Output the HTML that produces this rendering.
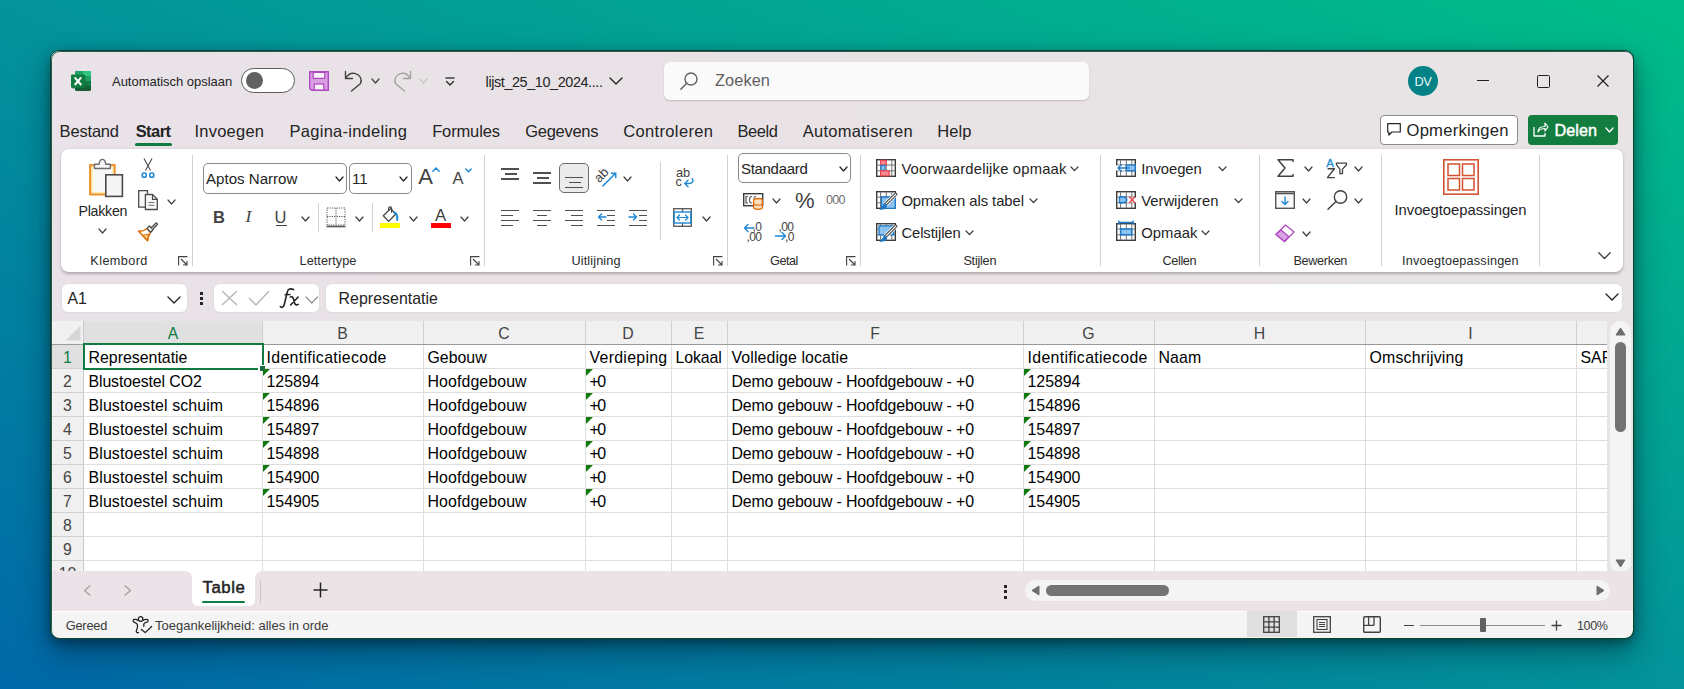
<!DOCTYPE html><html><head><meta charset="utf-8"><style>
html,body{margin:0;padding:0;}
body{width:1684px;height:689px;overflow:hidden;position:relative;font-family:"Liberation Sans",sans-serif;
background:linear-gradient(to top right,#0068a8 0%,#03939a 50%,#00bd88 100%);}
.t{position:absolute;line-height:1;white-space:nowrap;}
svg{overflow:visible}
</style></head><body>
<div style="position:absolute;left:51px;top:51px;width:1582px;height:587px;border-radius:8px;background:linear-gradient(to right,#e9e2e8,#e8e3e4);box-shadow:0 0 0 1px #07443a,0 4px 12px rgba(0,0,0,0.38),0 14px 32px rgba(0,15,35,0.42);"></div>
<svg style="position:absolute;left:71px;top:71px" width="20" height="20" viewBox="0 0 20 20" fill="none">
<rect x="4" y="0" width="16" height="20" rx="1.5" fill="#185c37"/>
<rect x="4" y="0" width="16" height="5" rx="1.5" fill="#21a366"/>
<rect x="12" y="0" width="8" height="5" fill="#33c481"/>
<rect x="4" y="5" width="16" height="5" fill="#21a366"/>
<rect x="12" y="5" width="8" height="5" fill="#21a366"/>
<rect x="4" y="10" width="16" height="5" fill="#107c41"/>
<rect x="0.5" y="4.5" width="14" height="13" rx="1" fill="#0b5a30" opacity="0.6"/>
<rect x="0" y="3.5" width="14" height="13.3" rx="1.2" fill="#107c41"/>
<path d="M3.7 6.3 L10.2 14 M10.2 6.3 L3.7 14" stroke="#fff" stroke-width="2"/>
</svg>
<div class="t" style="left:112.00px;top:75.30px;font-size:13px;color:#242424;font-weight:normal;letter-spacing:-0.028px;">Automatisch opslaan</div>
<div style="position:absolute;left:241px;top:68px;width:52px;height:23px;border:1px solid #5c5c5c;border-radius:13px;background:#fff;"></div>
<div style="position:absolute;left:245.5px;top:71.5px;width:17px;height:17px;border-radius:50%;background:#616161;"></div>
<svg style="position:absolute;left:309px;top:71px" width="20" height="20" viewBox="0 0 20 20" fill="none">
<path d="M0.7 0.7 H19.3 V19.3 H2.5 L0.7 17.5 Z" fill="#d9a0e2" stroke="#b146c2" stroke-width="1.4"/>
<rect x="4.2" y="1.4" width="11.6" height="6" fill="#f7f2f8" stroke="#b146c2" stroke-width="1.2"/>
<rect x="5.2" y="13" width="9.6" height="6" fill="#f7f2f8" stroke="#b146c2" stroke-width="1.2"/>
</svg>
<svg style="position:absolute;left:344px;top:70px" width="20" height="22" viewBox="0 0 20 22" fill="none">
<path d="M1.5 1.5 V8.5 H8.5" stroke="#424242" stroke-width="1.4" stroke-linecap="round" stroke-linejoin="round"/>
<path d="M1.8 8.3 C4 4.5 8 2.7 11.5 3.6 C16 4.8 18.5 9.5 16.5 13.5 L7.5 21" stroke="#424242" stroke-width="1.4" stroke-linecap="round"/>
</svg>
<svg style="position:absolute;left:371px;top:77.5px" width="9" height="6" viewBox="0 0 9 6" fill="none"><path d="M1 1 L4.5 5 L8 1" stroke="#424242" stroke-width="1.3" stroke-linecap="round" stroke-linejoin="round"/></svg>
<svg style="position:absolute;left:392px;top:70px" width="20" height="22" viewBox="0 0 20 22" fill="none">
<path d="M18.5 1.5 V8.5 H11.5" stroke="#a3a3a3" stroke-width="1.4" stroke-linecap="round" stroke-linejoin="round"/>
<path d="M18.2 8.3 C16 4.5 12 2.7 8.5 3.6 C4 4.8 1.5 9.5 3.5 13.5 L12.5 21" stroke="#a3a3a3" stroke-width="1.4" stroke-linecap="round"/>
</svg>
<svg style="position:absolute;left:419px;top:77.5px" width="9" height="6" viewBox="0 0 9 6" fill="none"><path d="M1 1 L4.5 5 L8 1" stroke="#c4c4c4" stroke-width="1.3" stroke-linecap="round" stroke-linejoin="round"/></svg>
<svg style="position:absolute;left:445px;top:77px" width="10" height="10" viewBox="0 0 10 10" fill="none"><path d="M0.5 1 H9.5" stroke="#242424" stroke-width="1.3"/><path d="M1.5 4.5 L5 8 L8.5 4.5" stroke="#242424" stroke-width="1.3" stroke-linecap="round" stroke-linejoin="round"/></svg>
<div class="t" style="left:485.60px;top:74.81px;font-size:14.4px;color:#242424;font-weight:normal;letter-spacing:-0.395px;">lijst_25_10_2024....</div>
<svg style="position:absolute;left:609px;top:77px" width="14" height="8" viewBox="0 0 14 8" fill="none"><path d="M1 1 L7.0 7 L13 1" stroke="#242424" stroke-width="1.4" stroke-linecap="round" stroke-linejoin="round"/></svg>
<div style="position:absolute;left:664px;top:62px;width:425px;height:38px;border-radius:6px;background:#fafafa;box-shadow:0 1px 1.5px rgba(0,0,0,0.18);"></div>
<svg style="position:absolute;left:680px;top:72px" width="18" height="18" viewBox="0 0 18 18" fill="none"><circle cx="11" cy="7" r="6" stroke="#616161" stroke-width="1.4"/><path d="M6.7 11.3 L0.8 17.2" stroke="#616161" stroke-width="1.5" stroke-linecap="round"/></svg>
<div class="t" style="left:715.00px;top:72.12px;font-size:16.4px;color:#616161;font-weight:normal;letter-spacing:0.060px;">Zoeken</div>
<div style="position:absolute;left:1408px;top:66px;width:30px;height:30px;border-radius:50%;background:#038387;"></div>
<div class="t" style="left:1408px;top:75.5px;width:30px;text-align:center;font-size:12.8px;color:#e8f6f6;letter-spacing:-0.3px">DV</div>
<div style="position:absolute;left:1477px;top:80px;width:12px;height:1.2px;background:#1f1f1f;"></div>
<div style="position:absolute;left:1537px;top:75px;width:10.6px;height:10.6px;border:1.2px solid #1f1f1f;border-radius:1.5px;"></div>
<svg style="position:absolute;left:1597px;top:75px" width="12" height="12" viewBox="0 0 12 12" fill="none"><path d="M0.5 0.5 L11.5 11.5 M11.5 0.5 L0.5 11.5" stroke="#1f1f1f" stroke-width="1.2"/></svg>
<div class="t" style="left:59.60px;top:123.03px;font-size:16.5px;color:#242424;font-weight:normal;letter-spacing:-0.183px;">Bestand</div>
<div class="t" style="left:135.70px;top:123.03px;font-size:16.5px;color:#242424;font-weight:bold;letter-spacing:-0.575px;">Start</div>
<div class="t" style="left:194.40px;top:123.03px;font-size:16.5px;color:#242424;font-weight:normal;letter-spacing:0.243px;">Invoegen</div>
<div class="t" style="left:289.60px;top:123.03px;font-size:16.5px;color:#242424;font-weight:normal;letter-spacing:0.257px;">Pagina-indeling</div>
<div class="t" style="left:432.20px;top:123.03px;font-size:16.5px;color:#242424;font-weight:normal;letter-spacing:-0.143px;">Formules</div>
<div class="t" style="left:525.30px;top:123.03px;font-size:16.5px;color:#242424;font-weight:normal;letter-spacing:-0.300px;">Gegevens</div>
<div class="t" style="left:623.20px;top:123.03px;font-size:16.5px;color:#242424;font-weight:normal;letter-spacing:0.360px;">Controleren</div>
<div class="t" style="left:737.50px;top:123.03px;font-size:16.5px;color:#242424;font-weight:normal;letter-spacing:-0.425px;">Beeld</div>
<div class="t" style="left:802.70px;top:123.03px;font-size:16.5px;color:#242424;font-weight:normal;letter-spacing:0.300px;">Automatiseren</div>
<div class="t" style="left:937.30px;top:123.03px;font-size:16.5px;color:#242424;font-weight:normal;letter-spacing:0.100px;">Help</div>
<div style="position:absolute;left:135px;top:143px;width:37px;height:3px;background:#107c41;border-radius:2px;"></div>
<div style="position:absolute;left:1380px;top:115px;width:136px;height:28px;border:1px solid #8a8a8a;border-radius:4px;background:#fff;"></div>
<svg style="position:absolute;left:1387px;top:123px" width="14" height="13" viewBox="0 0 14 13" fill="none"><path d="M0.7 0.7 H13.3 V9 H5 L1.8 12 V9 H0.7 Z" stroke="#242424" stroke-width="1.2" stroke-linejoin="round"/></svg>
<div class="t" style="left:1406.50px;top:122.75px;font-size:16.6px;color:#242424;font-weight:normal;letter-spacing:0.240px;">Opmerkingen</div>
<div style="position:absolute;left:1528px;top:115px;width:90px;height:30px;border-radius:4px;background:#137c3f;"></div>
<svg style="position:absolute;left:1533px;top:121px" width="16" height="16" viewBox="0 0 16 16" fill="none"><path d="M1 6 V15 H12 V12" stroke="#fff" stroke-width="1.3" stroke-linejoin="round"/><path d="M5 11 C5 7 8 5.5 12 5.5 V2 L15 6 L12 10 V7.5 C9 7.5 6.5 8.5 5 11 Z" stroke="#fff" stroke-width="1.2" stroke-linejoin="round"/></svg>
<div class="t" style="left:1554.60px;top:122.19px;font-size:16.2px;color:#ffffff;font-weight:normal;letter-spacing:0.025px;-webkit-text-stroke:0.45px #fff;">Delen</div>
<svg style="position:absolute;left:1605px;top:127px" width="9" height="6" viewBox="0 0 9 6" fill="none"><path d="M1 1 L4.5 5 L8 1" stroke="#ffffff" stroke-width="1.3" stroke-linecap="round" stroke-linejoin="round"/></svg>
<div style="position:absolute;left:61px;top:149px;width:1562px;height:123px;border-radius:8px;background:#fff;box-shadow:0 1.5px 3px rgba(40,20,30,0.28);"></div>
<div style="position:absolute;left:192px;top:155px;width:1px;height:111px;background:#d1d1d1;"></div>
<div style="position:absolute;left:484px;top:155px;width:1px;height:111px;background:#d1d1d1;"></div>
<div style="position:absolute;left:727px;top:155px;width:1px;height:111px;background:#d1d1d1;"></div>
<div style="position:absolute;left:860px;top:155px;width:1px;height:111px;background:#d1d1d1;"></div>
<div style="position:absolute;left:1100px;top:155px;width:1px;height:111px;background:#d1d1d1;"></div>
<div style="position:absolute;left:1259px;top:155px;width:1px;height:111px;background:#d1d1d1;"></div>
<div style="position:absolute;left:1381px;top:155px;width:1px;height:111px;background:#d1d1d1;"></div>
<div style="position:absolute;left:1539px;top:155px;width:1px;height:111px;background:#d1d1d1;"></div>
<div style="position:absolute;left:660px;top:162px;width:1px;height:78px;background:#d1d1d1;"></div>
<div style="position:absolute;left:318px;top:203px;width:1px;height:29px;background:#d1d1d1;"></div>
<div style="position:absolute;left:372px;top:203px;width:1px;height:29px;background:#d1d1d1;"></div>
<div class="t" style="left:90.30px;top:255.25px;font-size:12.7px;color:#2b2b2b;font-weight:normal;letter-spacing:0.400px;">Klembord</div>
<div class="t" style="left:299.60px;top:255.25px;font-size:12.7px;color:#2b2b2b;font-weight:normal;letter-spacing:0.033px;">Lettertype</div>
<div class="t" style="left:571.50px;top:255.25px;font-size:12.7px;color:#2b2b2b;font-weight:normal;letter-spacing:0.122px;">Uitlijning</div>
<div class="t" style="left:770.00px;top:255.25px;font-size:12.7px;color:#2b2b2b;font-weight:normal;letter-spacing:-0.475px;">Getal</div>
<div class="t" style="left:963.40px;top:255.25px;font-size:12.7px;color:#2b2b2b;font-weight:normal;letter-spacing:-0.250px;">Stijlen</div>
<div class="t" style="left:1162.50px;top:255.25px;font-size:12.7px;color:#2b2b2b;font-weight:normal;letter-spacing:-0.380px;">Cellen</div>
<div class="t" style="left:1293.50px;top:255.25px;font-size:12.7px;color:#2b2b2b;font-weight:normal;letter-spacing:-0.357px;">Bewerken</div>
<div class="t" style="left:1402.00px;top:255.25px;font-size:12.7px;color:#2b2b2b;font-weight:normal;letter-spacing:0.182px;">Invoegtoepassingen</div>
<svg style="position:absolute;left:178px;top:256px" width="10" height="10" viewBox="0 0 10 10" fill="none"><path d="M0.6 9.4 V0.6 H9.4" stroke="#424242" stroke-width="1.1"/><path d="M3 3 L9 9 M9 5 V9 H5" stroke="#424242" stroke-width="1.1"/></svg>
<svg style="position:absolute;left:470px;top:256px" width="10" height="10" viewBox="0 0 10 10" fill="none"><path d="M0.6 9.4 V0.6 H9.4" stroke="#424242" stroke-width="1.1"/><path d="M3 3 L9 9 M9 5 V9 H5" stroke="#424242" stroke-width="1.1"/></svg>
<svg style="position:absolute;left:713px;top:256px" width="10" height="10" viewBox="0 0 10 10" fill="none"><path d="M0.6 9.4 V0.6 H9.4" stroke="#424242" stroke-width="1.1"/><path d="M3 3 L9 9 M9 5 V9 H5" stroke="#424242" stroke-width="1.1"/></svg>
<svg style="position:absolute;left:846px;top:256px" width="10" height="10" viewBox="0 0 10 10" fill="none"><path d="M0.6 9.4 V0.6 H9.4" stroke="#424242" stroke-width="1.1"/><path d="M3 3 L9 9 M9 5 V9 H5" stroke="#424242" stroke-width="1.1"/></svg>
<svg style="position:absolute;left:88px;top:158px" width="36" height="40" viewBox="0 0 36 40" fill="none">
<rect x="2.2" y="7.2" width="24.4" height="29.2" fill="#fdf3dc" stroke="#e8912d" stroke-width="2.2"/>
<rect x="4" y="9" width="20.8" height="25.6" fill="#f8f8f8" stroke="#fde7a6" stroke-width="1.4"/>
<path d="M6.5 10.5 V6.3 H11 C11.5 3 12.5 1.4 14.4 1.4 C16.3 1.4 17.3 3 17.8 6.3 H22.3 V10.5 Z" fill="#f5f5f5" stroke="#6e6e6e" stroke-width="1.4" stroke-linejoin="round"/>
<rect x="17.8" y="16.8" width="16.6" height="21.6" fill="#f5f5f5" stroke="#4a4a4a" stroke-width="1.6"/>
</svg>
<div class="t" style="left:78.50px;top:204.48px;font-size:14.2px;color:#242424;font-weight:normal;letter-spacing:-0.250px;">Plakken</div>
<svg style="position:absolute;left:98px;top:228px" width="9" height="6" viewBox="0 0 9 6" fill="none"><path d="M1 1 L4.5 5 L8 1" stroke="#424242" stroke-width="1.2" stroke-linecap="round" stroke-linejoin="round"/></svg>
<svg style="position:absolute;left:141px;top:158px" width="14" height="20" viewBox="0 0 14 20" fill="none">
<path d="M3 0.5 L9.5 12.5 M11 0.5 L4.5 12.5" stroke="#4a4a4a" stroke-width="1.1"/>
<circle cx="3.2" cy="17.2" r="2.1" stroke="#1e88d6" stroke-width="1.5" fill="#fff"/>
<circle cx="10.8" cy="17.2" r="2.1" stroke="#1e88d6" stroke-width="1.5" fill="#fff"/>
</svg>
<svg style="position:absolute;left:138px;top:190px" width="20" height="20" viewBox="0 0 20 20" fill="none">
<path d="M9.5 3.8 V0.7 H0.7 V17.2 H7" stroke="#4a4a4a" stroke-width="1.3" fill="#f8f8f8"/>
<path d="M7.4 4.5 H14.5 L19.3 9.3 V19.5 H7.4 Z" fill="#f8f8f8" stroke="#4a4a4a" stroke-width="1.3" stroke-linejoin="round"/>
<path d="M14.5 4.5 V9.3 H19.3" stroke="#4a4a4a" stroke-width="1.2"/>
<path d="M10.5 12.5 H16.3 M10.5 15.3 H16.3" stroke="#6e6e6e" stroke-width="1.1"/>
</svg>
<svg style="position:absolute;left:167px;top:199px" width="9" height="6" viewBox="0 0 9 6" fill="none"><path d="M1 1 L4.5 5 L8 1" stroke="#424242" stroke-width="1.2" stroke-linecap="round" stroke-linejoin="round"/></svg>
<svg style="position:absolute;left:137px;top:220px" width="22" height="22" viewBox="0 0 22 22" fill="none">
<path d="M1.5 11 C4 11.5 7.5 10.5 10 8.5 L13.6 12.2 C11.7 14.6 10.8 18 10.5 20.8 Z" fill="#fff" stroke="#e06c00" stroke-width="1.5" stroke-linejoin="round"/>
<path d="M5.5 15.2 C7.5 14.8 9.2 14.5 11.5 14.2 L10.6 20.5 Z" fill="#fbd79f" stroke="#e06c00" stroke-width="1.1" stroke-linejoin="round"/>
<path d="M10 8.5 L12.5 6 L16.1 9.7 L13.6 12.2 Z" fill="#f8f8f8" stroke="#4a4a4a" stroke-width="1.3" stroke-linejoin="round"/>
<path d="M14.3 7.8 L18.8 3.3 C19.6 2.5 21 3.9 20.2 4.7 L15.7 9.2" fill="#f8f8f8" stroke="#4a4a4a" stroke-width="1.3"/>
</svg>
<div style="position:absolute;left:203px;top:163px;width:142px;height:29px;border:1px solid #8a8a8a;border-radius:5px;background:#fff;"></div>
<div class="t" style="left:206.00px;top:171.22px;font-size:15.1px;color:#242424;font-weight:normal;letter-spacing:-0.009px;">Aptos Narrow</div>
<svg style="position:absolute;left:334.5px;top:175.5px" width="9" height="6" viewBox="0 0 9 6" fill="none"><path d="M1 1 L4.5 5 L8 1" stroke="#242424" stroke-width="1.3" stroke-linecap="round" stroke-linejoin="round"/></svg>
<div style="position:absolute;left:349px;top:163px;width:61px;height:29px;border:1px solid #8a8a8a;border-radius:5px;background:#fff;"></div>
<div class="t" style="left:352.00px;top:171.22px;font-size:15.1px;color:#242424;font-weight:normal;letter-spacing:0.000px;">11</div>
<svg style="position:absolute;left:399px;top:175.5px" width="9" height="6" viewBox="0 0 9 6" fill="none"><path d="M1 1 L4.5 5 L8 1" stroke="#242424" stroke-width="1.3" stroke-linecap="round" stroke-linejoin="round"/></svg>
<div class="t" style="left:418.20px;top:165.68px;font-size:22px;color:#424242;font-weight:normal;letter-spacing:0.000px;">A</div>
<svg style="position:absolute;left:432px;top:167px" width="8" height="5" viewBox="0 0 8 5" fill="none"><path d="M0.8 4.2 L4 1 L7.2 4.2" stroke="#1e88d6" stroke-width="1.4" stroke-linecap="round"/></svg>
<div class="t" style="left:452.60px;top:170.33px;font-size:16.5px;color:#424242;font-weight:normal;letter-spacing:0.000px;">A</div>
<svg style="position:absolute;left:465px;top:168px" width="7" height="5" viewBox="0 0 7 5" fill="none"><path d="M0.8 1 L3.5 3.8 L6.2 1" stroke="#1e88d6" stroke-width="1.4" stroke-linecap="round"/></svg>
<div class="t" style="left:213.00px;top:208.53px;font-size:16.5px;color:#424242;font-weight:bold;letter-spacing:0.000px;">B</div>
<div class="t" style="left:245.50px;top:207.99px;font-size:17.5px;color:#424242;font-weight:normal;letter-spacing:0.000px;font-family:'Liberation Serif',serif;"><i>I</i></div>
<div class="t" style="left:274.60px;top:208.53px;font-size:16.5px;color:#424242;font-weight:normal;letter-spacing:0.000px;">U</div>
<div style="position:absolute;left:276px;top:224.5px;width:11px;height:1.4px;background:#424242;"></div>
<svg style="position:absolute;left:301px;top:215.5px" width="9" height="6" viewBox="0 0 9 6" fill="none"><path d="M1 1 L4.5 5 L8 1" stroke="#424242" stroke-width="1.3" stroke-linecap="round" stroke-linejoin="round"/></svg>
<svg style="position:absolute;left:326px;top:207px" width="20" height="21" viewBox="0 0 20 21" fill="none">
<path d="M1 1 H19 V18 H1 Z M10 1 V18 M1 9.5 H19" stroke="#555" stroke-width="1" stroke-dasharray="1.2 1.2"/>
<path d="M0.5 19.5 H19.5" stroke="#555" stroke-width="1.6"/>
</svg>
<svg style="position:absolute;left:355px;top:215.5px" width="9" height="6" viewBox="0 0 9 6" fill="none"><path d="M1 1 L4.5 5 L8 1" stroke="#424242" stroke-width="1.3" stroke-linecap="round" stroke-linejoin="round"/></svg>
<svg style="position:absolute;left:380px;top:206px" width="20" height="18" viewBox="0 0 20 18" fill="none">
<path d="M3.3 9.8 L10.6 2.6 L15.8 8 L8.6 15.4 Z" stroke="#424242" stroke-width="1.3" stroke-linejoin="round" fill="#fff"/>
<path d="M8.6 4.6 V2.2 C8.6 0.3 11.6 0.3 11.6 2.2 V6.2" stroke="#424242" stroke-width="1.2" stroke-linecap="round"/>
<path d="M14.3 6.4 C16.6 6.8 17.4 9.5 17.3 14" stroke="#1e88d6" stroke-width="2" stroke-linecap="round"/>
</svg>
<div style="position:absolute;left:380px;top:223px;width:20px;height:5px;background:#ffff00;"></div>
<svg style="position:absolute;left:409px;top:215.5px" width="9" height="6" viewBox="0 0 9 6" fill="none"><path d="M1 1 L4.5 5 L8 1" stroke="#424242" stroke-width="1.3" stroke-linecap="round" stroke-linejoin="round"/></svg>
<div class="t" style="left:435.00px;top:207.58px;font-size:16.8px;color:#424242;font-weight:normal;letter-spacing:0.000px;">A</div>
<div style="position:absolute;left:431px;top:223px;width:20px;height:5px;background:#ff0000;"></div>
<svg style="position:absolute;left:460px;top:215.5px" width="9" height="6" viewBox="0 0 9 6" fill="none"><path d="M1 1 L4.5 5 L8 1" stroke="#424242" stroke-width="1.3" stroke-linecap="round" stroke-linejoin="round"/></svg>
<div style="position:absolute;left:501px;top:168px;width:18px;height:1.5px;background:#4f4f4f;"></div>
<div style="position:absolute;left:505px;top:173px;width:12px;height:1.5px;background:#4f4f4f;"></div>
<div style="position:absolute;left:501px;top:178px;width:18px;height:1.5px;background:#4f4f4f;"></div>
<div style="position:absolute;left:533px;top:172px;width:18px;height:1.5px;background:#4f4f4f;"></div>
<div style="position:absolute;left:537px;top:177px;width:12px;height:1.5px;background:#4f4f4f;"></div>
<div style="position:absolute;left:533px;top:182px;width:18px;height:1.5px;background:#4f4f4f;"></div>
<div style="position:absolute;left:559px;top:163px;width:28px;height:28px;border:1px solid #6b6b6b;border-radius:5px;background:#ebebeb;"></div>
<div style="position:absolute;left:565px;top:176.5px;width:18px;height:1.5px;background:#4f4f4f;"></div>
<div style="position:absolute;left:569px;top:181.5px;width:12px;height:1.5px;background:#4f4f4f;"></div>
<div style="position:absolute;left:565px;top:186.5px;width:18px;height:1.5px;background:#4f4f4f;"></div>
<svg style="position:absolute;left:595px;top:166px" width="22" height="22" viewBox="0 0 22 22" fill="none">
<text x="0" y="0" transform="translate(4.2,17.2) rotate(-45)" font-family="Liberation Sans" font-size="13" fill="#424242">ab</text>
<path d="M7.4 20.5 L20.5 7.3" stroke="#1e88d6" stroke-width="1.5"/>
<path d="M16 7.3 H20.7 V12" stroke="#1e88d6" stroke-width="1.5"/>
</svg>
<svg style="position:absolute;left:623px;top:175.5px" width="9" height="6" viewBox="0 0 9 6" fill="none"><path d="M1 1 L4.5 5 L8 1" stroke="#424242" stroke-width="1.3" stroke-linecap="round" stroke-linejoin="round"/></svg>
<div style="position:absolute;left:501px;top:209.5px;width:18px;height:1.5px;background:#4f4f4f;"></div>
<div style="position:absolute;left:501px;top:214.5px;width:12px;height:1.5px;background:#4f4f4f;"></div>
<div style="position:absolute;left:501px;top:219.5px;width:18px;height:1.5px;background:#4f4f4f;"></div>
<div style="position:absolute;left:501px;top:224.5px;width:12px;height:1.5px;background:#4f4f4f;"></div>
<div style="position:absolute;left:533px;top:209.5px;width:18px;height:1.5px;background:#4f4f4f;"></div>
<div style="position:absolute;left:537px;top:214.5px;width:10px;height:1.5px;background:#4f4f4f;"></div>
<div style="position:absolute;left:533px;top:219.5px;width:18px;height:1.5px;background:#4f4f4f;"></div>
<div style="position:absolute;left:537px;top:224.5px;width:10px;height:1.5px;background:#4f4f4f;"></div>
<div style="position:absolute;left:565px;top:209.5px;width:18px;height:1.5px;background:#4f4f4f;"></div>
<div style="position:absolute;left:571px;top:214.5px;width:12px;height:1.5px;background:#4f4f4f;"></div>
<div style="position:absolute;left:565px;top:219.5px;width:18px;height:1.5px;background:#4f4f4f;"></div>
<div style="position:absolute;left:571px;top:224.5px;width:12px;height:1.5px;background:#4f4f4f;"></div>
<div style="position:absolute;left:597px;top:209.5px;width:18px;height:1.5px;background:#4f4f4f;"></div>
<div style="position:absolute;left:607px;top:214.5px;width:8px;height:1.5px;background:#4f4f4f;"></div>
<div style="position:absolute;left:607px;top:219.5px;width:8px;height:1.5px;background:#4f4f4f;"></div>
<div style="position:absolute;left:597px;top:224.5px;width:18px;height:1.5px;background:#4f4f4f;"></div>
<div style="position:absolute;left:629px;top:209.5px;width:18px;height:1.5px;background:#4f4f4f;"></div>
<div style="position:absolute;left:639px;top:214.5px;width:8px;height:1.5px;background:#4f4f4f;"></div>
<div style="position:absolute;left:639px;top:219.5px;width:8px;height:1.5px;background:#4f4f4f;"></div>
<div style="position:absolute;left:629px;top:224.5px;width:18px;height:1.5px;background:#4f4f4f;"></div>
<svg style="position:absolute;left:597px;top:212px" width="10" height="10" viewBox="0 0 10 10" fill="none"><path d="M9 5 H1.5 M4.5 2 L1.5 5 L4.5 8" stroke="#1e88d6" stroke-width="1.4" stroke-linecap="round" stroke-linejoin="round"/></svg>
<svg style="position:absolute;left:628px;top:212px" width="10" height="10" viewBox="0 0 10 10" fill="none"><path d="M1 5 H8.5 M5.5 2 L8.5 5 L5.5 8" stroke="#1e88d6" stroke-width="1.4" stroke-linecap="round" stroke-linejoin="round"/></svg>
<div class="t" style="left:676.00px;top:166.96px;font-size:12.8px;color:#424242;font-weight:normal;letter-spacing:0.000px;">ab</div>
<div class="t" style="left:675.50px;top:175.76px;font-size:12.8px;color:#424242;font-weight:normal;letter-spacing:0.000px;">c</div>
<svg style="position:absolute;left:683px;top:177px" width="12" height="13" viewBox="0 0 12 13" fill="none"><path d="M9.3 1.5 C10.8 4.5 9.5 6.5 6 6.5 H2" stroke="#1e88d6" stroke-width="1.4" fill="none" stroke-linecap="round"/><path d="M5 3.3 L1.8 6.5 L5 9.8" stroke="#1e88d6" stroke-width="1.4" stroke-linecap="round" stroke-linejoin="round"/></svg>
<svg style="position:absolute;left:673px;top:208px" width="19" height="19" viewBox="0 0 19 19" fill="none">
<rect x="0.7" y="0.7" width="17.6" height="17.6" stroke="#555" stroke-width="1.3" fill="#fff"/>
<path d="M9.5 0.7 V4 M9.5 15 V18.3" stroke="#555" stroke-width="1.3"/>
<rect x="1.2" y="4" width="16.6" height="11" stroke="#1e88d6" stroke-width="1.4" fill="#fff"/>
<path d="M4 9.5 H15 M6.5 7 L4 9.5 L6.5 12 M12.5 7 L15 9.5 L12.5 12" stroke="#1e88d6" stroke-width="1.2" stroke-linecap="round" stroke-linejoin="round"/>
</svg>
<svg style="position:absolute;left:702px;top:215.5px" width="9" height="6" viewBox="0 0 9 6" fill="none"><path d="M1 1 L4.5 5 L8 1" stroke="#424242" stroke-width="1.3" stroke-linecap="round" stroke-linejoin="round"/></svg>
<div style="position:absolute;left:738px;top:153px;width:111px;height:28px;border:1px solid #8a8a8a;border-radius:5px;background:#fff;"></div>
<div class="t" style="left:741.00px;top:161.30px;font-size:15px;color:#242424;font-weight:normal;letter-spacing:-0.312px;">Standaard</div>
<svg style="position:absolute;left:839px;top:165.5px" width="9" height="6" viewBox="0 0 9 6" fill="none"><path d="M1 1 L4.5 5 L8 1" stroke="#242424" stroke-width="1.3" stroke-linecap="round" stroke-linejoin="round"/></svg>
<svg style="position:absolute;left:743px;top:193px" width="21" height="18" viewBox="0 0 21 18" fill="none">
<rect x="0.7" y="0.7" width="19" height="12" stroke="#3b3b3b" stroke-width="1.4" fill="#fff"/>
<path d="M5 3.5 H3 V10 H5 M9 3.5 C7 3.3 6.5 5 6.5 6.8 C6.5 8.6 7 10.2 9 10" stroke="#555" stroke-width="1.2"/>
<path d="M13 3.3 C11.5 3.5 11 4.5 11 5.5" stroke="#555" stroke-width="1.1"/>
<ellipse cx="15" cy="7.3" rx="4.4" ry="1.8" fill="#fde0c2" stroke="#e06c00" stroke-width="1.3"/>
<path d="M10.6 7.3 V14.5 C10.6 16.9 19.4 16.9 19.4 14.5 V7.3" fill="#fde0c2" stroke="#e06c00" stroke-width="1.3"/>
<path d="M10.6 10.8 C10.6 12.6 19.4 12.6 19.4 10.8" stroke="#e06c00" stroke-width="1.2"/>
</svg>
<svg style="position:absolute;left:772px;top:197.5px" width="9" height="6" viewBox="0 0 9 6" fill="none"><path d="M1 1 L4.5 5 L8 1" stroke="#424242" stroke-width="1.3" stroke-linecap="round" stroke-linejoin="round"/></svg>
<div class="t" style="left:795.00px;top:190.18px;font-size:22px;color:#424242;font-weight:normal;letter-spacing:0.000px;">%</div>
<div class="t" style="left:826.00px;top:194.13px;font-size:12.6px;color:#707070;font-weight:normal;letter-spacing:-0.750px;">000</div>
<div class="t" style="left:752.50px;top:220.84px;font-size:12px;color:#424242;font-weight:normal;letter-spacing:0.000px;letter-spacing:-0.6px;">,0</div>
<div class="t" style="left:746.50px;top:230.84px;font-size:12px;color:#424242;font-weight:normal;letter-spacing:0.000px;letter-spacing:-0.6px;">,00</div>
<svg style="position:absolute;left:742.5px;top:222.5px" width="12" height="10" viewBox="0 0 12 10" fill="none"><path d="M11 5 H1.5 M5 1.5 L1.5 5 L5 8.5" stroke="#1e88d6" stroke-width="1.4" stroke-linecap="round" stroke-linejoin="round"/></svg>
<div class="t" style="left:778.50px;top:220.84px;font-size:12px;color:#424242;font-weight:normal;letter-spacing:0.000px;letter-spacing:-0.6px;">,00</div>
<div class="t" style="left:785.00px;top:230.84px;font-size:12px;color:#424242;font-weight:normal;letter-spacing:0.000px;letter-spacing:-0.6px;">,0</div>
<svg style="position:absolute;left:774.5px;top:231px" width="12" height="10" viewBox="0 0 12 10" fill="none"><path d="M0.5 5 H10.5 M7 1.5 L10.5 5 L7 8.5" stroke="#1e88d6" stroke-width="1.4" stroke-linecap="round" stroke-linejoin="round"/></svg>
<svg style="position:absolute;left:876px;top:159px" width="20" height="18" viewBox="0 0 20 18" fill="none">
<rect x="0.7" y="0.7" width="18.6" height="16.6" stroke="#3b3b3b" stroke-width="1.4" fill="#fff"/>
<path d="M4.6 0.7 V17.3 M10.3 0.7 V17.3 M15.8 0.7 V17.3 M0.7 6 H19.3 M0.7 11.8 H19.3" stroke="#707070" stroke-width="1"/>
<rect x="4.6" y="1.4" width="5.7" height="4.6" fill="#f58a93" stroke="#e8464c" stroke-width="1.2"/>
<rect x="5" y="6.4" width="4" height="5" fill="#8cc2f0" stroke="#1e78c8" stroke-width="1.2"/>
<rect x="4.6" y="11.8" width="8.6" height="5" fill="#f58a93" stroke="#e8464c" stroke-width="1.2"/></svg>
<svg style="position:absolute;left:876px;top:191px" width="20" height="18" viewBox="0 0 20 18" fill="none">
<rect x="0.7" y="0.7" width="18.6" height="16.6" stroke="#3b3b3b" stroke-width="1.4" fill="#fff"/>
<path d="M4.6 0.7 V17.3 M10.3 0.7 V17.3 M15.8 0.7 V17.3 M0.7 6 H19.3 M0.7 11.8 H19.3" stroke="#707070" stroke-width="1"/>
<path d="M5.5 6 H19.3 V17.3 H5.5 Z" fill="#8cc2f0" stroke="#1e78c8" stroke-width="1.3"/>
<path d="M19.8 3.2 L9.5 13.4" stroke="#fff" stroke-width="4.6"/>
<path d="M19.8 3.2 L9.5 13.4" stroke="#3b3b3b" stroke-width="3.2" stroke-linecap="round"/>
<path d="M19.8 3.2 L9.5 13.4" stroke="#fff" stroke-width="1.2" stroke-linecap="round"/>
<path d="M9 12.5 C6.5 13 6.8 16.5 3.2 18.8 C7.5 19.2 11 17.3 11.2 14.5 Z" fill="#1e78c8"/></svg>
<svg style="position:absolute;left:876px;top:223px" width="20" height="18" viewBox="0 0 20 18" fill="none">
<rect x="0.7" y="0.7" width="18.6" height="16.6" stroke="#3b3b3b" stroke-width="1.4" fill="#fff"/>
<path d="M4.6 0.7 V17.3 M10.3 0.7 V17.3 M15.8 0.7 V17.3 M0.7 6 H19.3 M0.7 11.8 H19.3" stroke="#707070" stroke-width="1"/>
<path d="M3 2.8 H17.5 V11.8 H3 Z" fill="#8cc2f0" stroke="#1e78c8" stroke-width="1.3"/>
<path d="M19.8 3.2 L9.5 13.4" stroke="#fff" stroke-width="4.6"/>
<path d="M19.8 3.2 L9.5 13.4" stroke="#3b3b3b" stroke-width="3.2" stroke-linecap="round"/>
<path d="M19.8 3.2 L9.5 13.4" stroke="#fff" stroke-width="1.2" stroke-linecap="round"/>
<path d="M9 12.5 C6.5 13 6.8 16.5 3.2 18.8 C7.5 19.2 11 17.3 11.2 14.5 Z" fill="#1e78c8"/></svg>
<div class="t" style="left:901.40px;top:162.27px;font-size:14.8px;color:#242424;font-weight:normal;letter-spacing:0.181px;">Voorwaardelijke opmaak</div>
<svg style="position:absolute;left:1070px;top:165.5px" width="9" height="5.5" viewBox="0 0 9 5.5" fill="none"><path d="M1 1 L4.5 4.5 L8 1" stroke="#424242" stroke-width="1.3" stroke-linecap="round" stroke-linejoin="round"/></svg>
<div class="t" style="left:901.40px;top:193.77px;font-size:14.8px;color:#242424;font-weight:normal;letter-spacing:-0.050px;">Opmaken als tabel</div>
<svg style="position:absolute;left:1029px;top:197.5px" width="9" height="5.5" viewBox="0 0 9 5.5" fill="none"><path d="M1 1 L4.5 4.5 L8 1" stroke="#424242" stroke-width="1.3" stroke-linecap="round" stroke-linejoin="round"/></svg>
<div class="t" style="left:901.40px;top:225.97px;font-size:14.8px;color:#242424;font-weight:normal;letter-spacing:-0.078px;">Celstijlen</div>
<svg style="position:absolute;left:965px;top:229.5px" width="9" height="5.5" viewBox="0 0 9 5.5" fill="none"><path d="M1 1 L4.5 4.5 L8 1" stroke="#424242" stroke-width="1.3" stroke-linecap="round" stroke-linejoin="round"/></svg>
<svg style="position:absolute;left:1116px;top:159px" width="20" height="18" viewBox="0 0 20 18" fill="none">
<rect x="0.7" y="0.7" width="18.6" height="16.6" stroke="#3b3b3b" stroke-width="1.4" fill="#fff"/>
<path d="M4.6 0.7 V17.3 M10.3 0.7 V17.3 M15.8 0.7 V17.3 M0.7 6 H19.3 M0.7 11.8 H19.3" stroke="#707070" stroke-width="1"/>
<rect x="0" y="6.5" width="9" height="5" fill="#fff"/>
<rect x="10.3" y="6" width="9" height="5.8" fill="#8cc2f0" stroke="#1e78c8" stroke-width="1.4"/>
<path d="M13 9 H2 M5.3 5.7 L2 9 L5.3 12.3" stroke="#1e78c8" stroke-width="1.4" stroke-linecap="round" stroke-linejoin="round"/></svg>
<svg style="position:absolute;left:1116px;top:191px" width="20" height="18" viewBox="0 0 20 18" fill="none">
<rect x="0.7" y="0.7" width="18.6" height="16.6" stroke="#3b3b3b" stroke-width="1.4" fill="#fff"/>
<path d="M4.6 0.7 V17.3 M10.3 0.7 V17.3 M15.8 0.7 V17.3 M0.7 6 H19.3 M0.7 11.8 H19.3" stroke="#707070" stroke-width="1"/>
<rect x="11" y="6.5" width="9.5" height="5" fill="#fff"/>
<path d="M3.5 6 H9 L11 8.9 L9 11.8 H3.5 Z" fill="#8cc2f0" stroke="#1e78c8" stroke-width="1.4" stroke-linejoin="round"/>
<path d="M13.3 5.8 L19 12 M19 5.8 L13.3 12" stroke="#e8464c" stroke-width="1.4"/></svg>
<svg style="position:absolute;left:1116px;top:223px" width="20" height="18" viewBox="0 0 20 18" fill="none">
<rect x="0.7" y="0.7" width="18.6" height="16.6" stroke="#3b3b3b" stroke-width="1.4" fill="#fff"/>
<path d="M4.6 0.7 V17.3 M10.3 0.7 V17.3 M15.8 0.7 V17.3 M0.7 6 H19.3 M0.7 11.8 H19.3" stroke="#707070" stroke-width="1"/>
<rect x="4.6" y="6" width="11.2" height="5.8" fill="#8cc2f0" stroke="#1e78c8" stroke-width="1.5"/></svg>
<svg style="position:absolute;left:1118px;top:220px" width="16" height="5" viewBox="0 0 16 5" fill="none"><path d="M0.8 0.5 V4.5 M15.2 0.5 V4.5 M0.8 2.5 H15.2" stroke="#1e78c8" stroke-width="1.3"/></svg>
<div class="t" style="left:1141.30px;top:162.27px;font-size:14.8px;color:#242424;font-weight:normal;letter-spacing:-0.071px;">Invoegen</div>
<svg style="position:absolute;left:1217.5px;top:165.5px" width="9" height="5.5" viewBox="0 0 9 5.5" fill="none"><path d="M1 1 L4.5 4.5 L8 1" stroke="#424242" stroke-width="1.3" stroke-linecap="round" stroke-linejoin="round"/></svg>
<div class="t" style="left:1141.30px;top:193.77px;font-size:14.8px;color:#242424;font-weight:normal;letter-spacing:-0.020px;">Verwijderen</div>
<svg style="position:absolute;left:1234px;top:197.5px" width="9" height="5.5" viewBox="0 0 9 5.5" fill="none"><path d="M1 1 L4.5 4.5 L8 1" stroke="#424242" stroke-width="1.3" stroke-linecap="round" stroke-linejoin="round"/></svg>
<div class="t" style="left:1141.30px;top:225.97px;font-size:14.8px;color:#242424;font-weight:normal;letter-spacing:0.040px;">Opmaak</div>
<svg style="position:absolute;left:1201px;top:229.5px" width="9" height="5.5" viewBox="0 0 9 5.5" fill="none"><path d="M1 1 L4.5 4.5 L8 1" stroke="#424242" stroke-width="1.3" stroke-linecap="round" stroke-linejoin="round"/></svg>
<svg style="position:absolute;left:1277px;top:159px" width="17" height="18" viewBox="0 0 17 18" fill="none"><path d="M16 2.5 V0.8 H1 L8 9 L1 17.2 H16 V15.5" stroke="#424242" stroke-width="1.5" stroke-linejoin="round" stroke-linecap="round"/></svg>
<svg style="position:absolute;left:1304px;top:166px" width="9" height="6" viewBox="0 0 9 6" fill="none"><path d="M1 1 L4.5 5 L8 1" stroke="#424242" stroke-width="1.3" stroke-linecap="round" stroke-linejoin="round"/></svg>
<svg style="position:absolute;left:1326px;top:158px" width="22" height="21" viewBox="0 0 22 21" fill="none">
<text x="0.3" y="8.8" font-family="Liberation Sans" font-size="11.5" fill="#1e88d6" stroke="#1e88d6" stroke-width="0.3">A</text>
<path d="M1.6 10.8 H8.4 L1.4 19.6 H8.8" stroke="#424242" stroke-width="1.4" stroke-linejoin="round"/>
<path d="M10.4 5.1 H20.5 V6.7 L16.5 11.1 V15.6 H13.9 V11.1 L10.4 6.7 Z" stroke="#424242" stroke-width="1.3" stroke-linejoin="round" fill="#fff"/>
</svg>
<svg style="position:absolute;left:1354px;top:166px" width="9" height="6" viewBox="0 0 9 6" fill="none"><path d="M1 1 L4.5 5 L8 1" stroke="#424242" stroke-width="1.3" stroke-linecap="round" stroke-linejoin="round"/></svg>
<svg style="position:absolute;left:1275px;top:191px" width="20" height="18" viewBox="0 0 20 18" fill="none"><rect x="0.7" y="0.7" width="18.6" height="16.6" stroke="#555" stroke-width="1.4" fill="#fafafa"/><path d="M0.7 2.5 H19.3" stroke="#555" stroke-width="1.6"/><path d="M10 6 V13 M7 10.5 L10 13.5 L13 10.5" stroke="#1e88d6" stroke-width="1.4" stroke-linecap="round" stroke-linejoin="round"/></svg>
<svg style="position:absolute;left:1302px;top:198px" width="9" height="6" viewBox="0 0 9 6" fill="none"><path d="M1 1 L4.5 5 L8 1" stroke="#424242" stroke-width="1.3" stroke-linecap="round" stroke-linejoin="round"/></svg>
<svg style="position:absolute;left:1327px;top:190px" width="21" height="20" viewBox="0 0 21 20" fill="none"><circle cx="13.5" cy="7" r="6.2" stroke="#424242" stroke-width="1.4" fill="#fafafa"/><path d="M9 11.5 L1 19.3" stroke="#424242" stroke-width="1.5" stroke-linecap="round"/></svg>
<svg style="position:absolute;left:1354px;top:198px" width="9" height="6" viewBox="0 0 9 6" fill="none"><path d="M1 1 L4.5 5 L8 1" stroke="#424242" stroke-width="1.3" stroke-linecap="round" stroke-linejoin="round"/></svg>
<svg style="position:absolute;left:1275px;top:222px" width="20" height="20" viewBox="0 0 20 20" fill="none"><path d="M1 12.5 L10.5 3 L19 10 L9.5 19.5 Z" fill="#fff" stroke="#b146c2" stroke-width="1.3" stroke-linejoin="round"/><path d="M1 12.5 L5.8 7.8 L13.8 14.8 L9.5 19.5 Z" fill="#d7a4df" stroke="#b146c2" stroke-width="1.3" stroke-linejoin="round"/></svg>
<svg style="position:absolute;left:1302px;top:231px" width="9" height="6" viewBox="0 0 9 6" fill="none"><path d="M1 1 L4.5 5 L8 1" stroke="#424242" stroke-width="1.3" stroke-linecap="round" stroke-linejoin="round"/></svg>
<svg style="position:absolute;left:1443px;top:159px" width="36" height="36" viewBox="0 0 36 36" fill="none">
<rect x="0.8" y="0.8" width="34.4" height="34.4" stroke="#d35230" stroke-width="1.6" fill="#fff"/>
<rect x="5" y="5" width="11.5" height="11.5" stroke="#d35230" stroke-width="1.5"/>
<rect x="19.5" y="5" width="11.5" height="11.5" stroke="#d35230" stroke-width="1.5"/>
<rect x="5" y="19.5" width="11.5" height="11.5" stroke="#d35230" stroke-width="1.5"/>
<rect x="19.5" y="19.5" width="11.5" height="11.5" stroke="#d35230" stroke-width="1.5"/>
</svg>
<div class="t" style="left:1394.50px;top:203.47px;font-size:14.8px;color:#242424;font-weight:normal;letter-spacing:-0.024px;">Invoegtoepassingen</div>
<svg style="position:absolute;left:1598px;top:252px" width="13" height="8" viewBox="0 0 13 8" fill="none"><path d="M0.8 0.8 L6.5 6.5 L12.2 0.8" stroke="#424242" stroke-width="1.4" stroke-linecap="round" stroke-linejoin="round"/></svg>
<div style="position:absolute;left:62px;top:284px;width:125px;height:28px;border-radius:6px;background:#fff;box-shadow:0 0 0 1px #dedede;"></div>
<div class="t" style="left:67.50px;top:290.63px;font-size:15.8px;color:#242424;font-weight:normal;letter-spacing:0.000px;">A1</div>
<svg style="position:absolute;left:167px;top:296px" width="14" height="8" viewBox="0 0 14 8" fill="none"><path d="M1 1 L7.0 7 L13 1" stroke="#242424" stroke-width="1.4" stroke-linecap="round" stroke-linejoin="round"/></svg>
<div style="position:absolute;left:199.5px;top:292px;width:3px;height:3px;background:#242424;"></div>
<div style="position:absolute;left:199.5px;top:297px;width:3px;height:3px;background:#242424;"></div>
<div style="position:absolute;left:199.5px;top:302px;width:3px;height:3px;background:#242424;"></div>
<div style="position:absolute;left:214px;top:284px;width:105px;height:28px;border-radius:6px;background:#fff;box-shadow:0 0 0 1px #dedede;"></div>
<svg style="position:absolute;left:221px;top:290px" width="17" height="16" viewBox="0 0 17 16" fill="none"><path d="M1 1 L16 15 M16 1 L1 15" stroke="#b3b3b3" stroke-width="1.3"/></svg>
<svg style="position:absolute;left:248px;top:290px" width="22" height="16" viewBox="0 0 22 16" fill="none"><path d="M1 8 L8 15 L21 1" stroke="#b3b3b3" stroke-width="1.3"/></svg>
<svg style="position:absolute;left:278px;top:286px" width="22" height="24" viewBox="0 0 22 24" fill="none"><path d="M2.3 20.5 C3.8 22.2 5.6 21.4 6.4 18 L9.3 6 C10.1 2.8 12.3 2.2 15.6 3.6" stroke="#242424" stroke-width="1.6" stroke-linecap="round"/><path d="M6.5 8.6 H12.6" stroke="#242424" stroke-width="1.4"/><path d="M12.3 11 C14 10.4 14.9 11 15.4 12.8 L16.6 17 C17.2 18.9 18.2 19.4 20.2 18.4 M20.2 11 L12.6 19" stroke="#242424" stroke-width="1.6" stroke-linecap="round"/></svg>
<svg style="position:absolute;left:304.5px;top:296px" width="13.5" height="8" viewBox="0 0 13.5 8" fill="none"><path d="M1 1 L6.75 7 L12.5 1" stroke="#8f8f8f" stroke-width="1.2" stroke-linecap="round" stroke-linejoin="round"/></svg>
<div style="position:absolute;left:326px;top:284px;width:1296px;height:28px;border-radius:6px;background:#fff;box-shadow:0 0 0 1px #dedede;"></div>
<div class="t" style="left:338.60px;top:290.54px;font-size:15.9px;color:#242424;font-weight:normal;letter-spacing:0.033px;">Representatie</div>
<svg style="position:absolute;left:1605px;top:292.5px" width="14" height="8" viewBox="0 0 14 8" fill="none"><path d="M1 1 L7.0 7 L13 1" stroke="#242424" stroke-width="1.4" stroke-linecap="round" stroke-linejoin="round"/></svg>
<div style="position:absolute;left:51px;top:321px;width:1556px;height:250px;background:#fff;overflow:hidden;"></div>
<div style="position:absolute;left:51px;top:321px;width:1556px;height:24px;background:#f0f0f0;"></div>
<div style="position:absolute;left:84px;top:321px;width:178px;height:24px;background:#e0e0e0;"></div>
<div style="position:absolute;left:51px;top:345px;width:33px;height:226px;background:#f0f0f0;"></div>
<div style="position:absolute;left:51px;top:345px;width:33px;height:23px;background:#e0e0e0;"></div>
<svg style="position:absolute;left:65px;top:325px" width="16" height="16" viewBox="0 0 16 16" fill="none"><path d="M15.5 0.5 V15.5 H0.5 Z" fill="#d6d6d6"/></svg>
<div style="position:absolute;left:262px;top:345px;width:1px;height:226px;background:#dedede;"></div>
<div style="position:absolute;left:262px;top:321px;width:1px;height:24px;background:#d0d0d0;"></div>
<div style="position:absolute;left:423px;top:345px;width:1px;height:226px;background:#dedede;"></div>
<div style="position:absolute;left:423px;top:321px;width:1px;height:24px;background:#d0d0d0;"></div>
<div style="position:absolute;left:585px;top:345px;width:1px;height:226px;background:#dedede;"></div>
<div style="position:absolute;left:585px;top:321px;width:1px;height:24px;background:#d0d0d0;"></div>
<div style="position:absolute;left:671px;top:345px;width:1px;height:226px;background:#dedede;"></div>
<div style="position:absolute;left:671px;top:321px;width:1px;height:24px;background:#d0d0d0;"></div>
<div style="position:absolute;left:727px;top:345px;width:1px;height:226px;background:#dedede;"></div>
<div style="position:absolute;left:727px;top:321px;width:1px;height:24px;background:#d0d0d0;"></div>
<div style="position:absolute;left:1023px;top:345px;width:1px;height:226px;background:#dedede;"></div>
<div style="position:absolute;left:1023px;top:321px;width:1px;height:24px;background:#d0d0d0;"></div>
<div style="position:absolute;left:1154px;top:345px;width:1px;height:226px;background:#dedede;"></div>
<div style="position:absolute;left:1154px;top:321px;width:1px;height:24px;background:#d0d0d0;"></div>
<div style="position:absolute;left:1365px;top:345px;width:1px;height:226px;background:#dedede;"></div>
<div style="position:absolute;left:1365px;top:321px;width:1px;height:24px;background:#d0d0d0;"></div>
<div style="position:absolute;left:1576px;top:345px;width:1px;height:226px;background:#dedede;"></div>
<div style="position:absolute;left:1576px;top:321px;width:1px;height:24px;background:#d0d0d0;"></div>
<div style="position:absolute;left:83px;top:321px;width:1px;height:250px;background:#c8c8c8;"></div>
<div style="position:absolute;left:84px;top:368px;width:1523px;height:1px;background:#dedede;"></div>
<div style="position:absolute;left:51px;top:368px;width:33px;height:1px;background:#d0d0d0;"></div>
<div style="position:absolute;left:84px;top:392px;width:1523px;height:1px;background:#dedede;"></div>
<div style="position:absolute;left:51px;top:392px;width:33px;height:1px;background:#d0d0d0;"></div>
<div style="position:absolute;left:84px;top:416px;width:1523px;height:1px;background:#dedede;"></div>
<div style="position:absolute;left:51px;top:416px;width:33px;height:1px;background:#d0d0d0;"></div>
<div style="position:absolute;left:84px;top:440px;width:1523px;height:1px;background:#dedede;"></div>
<div style="position:absolute;left:51px;top:440px;width:33px;height:1px;background:#d0d0d0;"></div>
<div style="position:absolute;left:84px;top:464px;width:1523px;height:1px;background:#dedede;"></div>
<div style="position:absolute;left:51px;top:464px;width:33px;height:1px;background:#d0d0d0;"></div>
<div style="position:absolute;left:84px;top:488px;width:1523px;height:1px;background:#dedede;"></div>
<div style="position:absolute;left:51px;top:488px;width:33px;height:1px;background:#d0d0d0;"></div>
<div style="position:absolute;left:84px;top:512px;width:1523px;height:1px;background:#dedede;"></div>
<div style="position:absolute;left:51px;top:512px;width:33px;height:1px;background:#d0d0d0;"></div>
<div style="position:absolute;left:84px;top:536px;width:1523px;height:1px;background:#dedede;"></div>
<div style="position:absolute;left:51px;top:536px;width:33px;height:1px;background:#d0d0d0;"></div>
<div style="position:absolute;left:84px;top:560px;width:1523px;height:1px;background:#dedede;"></div>
<div style="position:absolute;left:51px;top:560px;width:33px;height:1px;background:#d0d0d0;"></div>
<div style="position:absolute;left:51px;top:344px;width:1556px;height:1px;background:#9a9a9a;"></div>
<div class="t" style="left:84px;top:325.63px;width:178px;text-align:center;font-size:15.8px;color:#107c41">A</div>
<div class="t" style="left:262px;top:325.63px;width:161px;text-align:center;font-size:15.8px;color:#444">B</div>
<div class="t" style="left:423px;top:325.63px;width:162px;text-align:center;font-size:15.8px;color:#444">C</div>
<div class="t" style="left:585px;top:325.63px;width:86px;text-align:center;font-size:15.8px;color:#444">D</div>
<div class="t" style="left:671px;top:325.63px;width:56px;text-align:center;font-size:15.8px;color:#444">E</div>
<div class="t" style="left:727px;top:325.63px;width:296px;text-align:center;font-size:15.8px;color:#444">F</div>
<div class="t" style="left:1023px;top:325.63px;width:131px;text-align:center;font-size:15.8px;color:#444">G</div>
<div class="t" style="left:1154px;top:325.63px;width:211px;text-align:center;font-size:15.8px;color:#444">H</div>
<div class="t" style="left:1365px;top:325.63px;width:211px;text-align:center;font-size:15.8px;color:#444">I</div>
<div class="t" style="left:51px;top:350.23px;width:33px;text-align:center;font-size:15.8px;color:#107c41">1</div>
<div class="t" style="left:51px;top:374.23px;width:33px;text-align:center;font-size:15.8px;color:#444">2</div>
<div class="t" style="left:51px;top:398.23px;width:33px;text-align:center;font-size:15.8px;color:#444">3</div>
<div class="t" style="left:51px;top:422.23px;width:33px;text-align:center;font-size:15.8px;color:#444">4</div>
<div class="t" style="left:51px;top:446.23px;width:33px;text-align:center;font-size:15.8px;color:#444">5</div>
<div class="t" style="left:51px;top:470.23px;width:33px;text-align:center;font-size:15.8px;color:#444">6</div>
<div class="t" style="left:51px;top:494.23px;width:33px;text-align:center;font-size:15.8px;color:#444">7</div>
<div class="t" style="left:51px;top:518.23px;width:33px;text-align:center;font-size:15.8px;color:#444">8</div>
<div class="t" style="left:51px;top:542.23px;width:33px;text-align:center;font-size:15.8px;color:#444">9</div>
<div class="t" style="left:51px;top:566.23px;width:33px;text-align:center;font-size:15.8px;color:#444">10</div>
<div class="t" style="left:88.50px;top:350.04px;font-size:15.9px;color:#000;font-weight:normal;letter-spacing:0.000px;">Representatie</div>
<div class="t" style="left:266.50px;top:350.04px;font-size:15.9px;color:#000;font-weight:normal;letter-spacing:0.319px;">Identificatiecode</div>
<div class="t" style="left:427.50px;top:350.04px;font-size:15.9px;color:#000;font-weight:normal;letter-spacing:0.000px;">Gebouw</div>
<div class="t" style="left:589.50px;top:350.04px;font-size:15.9px;color:#000;font-weight:normal;letter-spacing:0.289px;">Verdieping</div>
<div class="t" style="left:675.50px;top:350.04px;font-size:15.9px;color:#000;font-weight:normal;letter-spacing:-0.100px;">Lokaal</div>
<div class="t" style="left:731.50px;top:350.04px;font-size:15.9px;color:#000;font-weight:normal;letter-spacing:0.106px;">Volledige locatie</div>
<div class="t" style="left:1027.50px;top:350.04px;font-size:15.9px;color:#000;font-weight:normal;letter-spacing:0.319px;">Identificatiecode</div>
<div class="t" style="left:1158.50px;top:350.04px;font-size:15.9px;color:#000;font-weight:normal;letter-spacing:0.100px;">Naam</div>
<div class="t" style="left:1369.50px;top:350.04px;font-size:15.9px;color:#000;font-weight:normal;letter-spacing:0.191px;">Omschrijving</div>
<div class="t" style="left:1580.50px;top:350.04px;font-size:15.9px;color:#000;font-weight:normal;letter-spacing:0.000px;">SAP</div>
<div class="t" style="left:88.50px;top:374.04px;font-size:15.9px;color:#000;font-weight:normal;letter-spacing:-0.114px;">Blustoestel CO2</div>
<div class="t" style="left:266.50px;top:374.04px;font-size:15.9px;color:#000;font-weight:normal;letter-spacing:-0.020px;">125894</div>
<div class="t" style="left:427.50px;top:374.04px;font-size:15.9px;color:#000;font-weight:normal;letter-spacing:0.100px;">Hoofdgebouw</div>
<div class="t" style="left:589.50px;top:374.04px;font-size:15.9px;color:#000;font-weight:normal;letter-spacing:-1.500px;">+0</div>
<div class="t" style="left:731.50px;top:374.04px;font-size:15.9px;color:#000;font-weight:normal;letter-spacing:-0.152px;">Demo gebouw - Hoofdgebouw - +0</div>
<div class="t" style="left:1027.50px;top:374.04px;font-size:15.9px;color:#000;font-weight:normal;letter-spacing:-0.020px;">125894</div>
<svg style="position:absolute;left:263px;top:369px" width="7" height="7" viewBox="0 0 7 7" fill="none"><path d="M0 0 H7 L0 7 Z" fill="#117a0f"/></svg>
<svg style="position:absolute;left:586px;top:369px" width="7" height="7" viewBox="0 0 7 7" fill="none"><path d="M0 0 H7 L0 7 Z" fill="#117a0f"/></svg>
<svg style="position:absolute;left:1024px;top:369px" width="7" height="7" viewBox="0 0 7 7" fill="none"><path d="M0 0 H7 L0 7 Z" fill="#117a0f"/></svg>
<div class="t" style="left:88.50px;top:398.04px;font-size:15.9px;color:#000;font-weight:normal;letter-spacing:0.124px;">Blustoestel schuim</div>
<div class="t" style="left:266.50px;top:398.04px;font-size:15.9px;color:#000;font-weight:normal;letter-spacing:-0.020px;">154896</div>
<div class="t" style="left:427.50px;top:398.04px;font-size:15.9px;color:#000;font-weight:normal;letter-spacing:0.100px;">Hoofdgebouw</div>
<div class="t" style="left:589.50px;top:398.04px;font-size:15.9px;color:#000;font-weight:normal;letter-spacing:-1.500px;">+0</div>
<div class="t" style="left:731.50px;top:398.04px;font-size:15.9px;color:#000;font-weight:normal;letter-spacing:-0.152px;">Demo gebouw - Hoofdgebouw - +0</div>
<div class="t" style="left:1027.50px;top:398.04px;font-size:15.9px;color:#000;font-weight:normal;letter-spacing:-0.020px;">154896</div>
<svg style="position:absolute;left:263px;top:393px" width="7" height="7" viewBox="0 0 7 7" fill="none"><path d="M0 0 H7 L0 7 Z" fill="#117a0f"/></svg>
<svg style="position:absolute;left:586px;top:393px" width="7" height="7" viewBox="0 0 7 7" fill="none"><path d="M0 0 H7 L0 7 Z" fill="#117a0f"/></svg>
<svg style="position:absolute;left:1024px;top:393px" width="7" height="7" viewBox="0 0 7 7" fill="none"><path d="M0 0 H7 L0 7 Z" fill="#117a0f"/></svg>
<div class="t" style="left:88.50px;top:422.04px;font-size:15.9px;color:#000;font-weight:normal;letter-spacing:0.124px;">Blustoestel schuim</div>
<div class="t" style="left:266.50px;top:422.04px;font-size:15.9px;color:#000;font-weight:normal;letter-spacing:-0.020px;">154897</div>
<div class="t" style="left:427.50px;top:422.04px;font-size:15.9px;color:#000;font-weight:normal;letter-spacing:0.100px;">Hoofdgebouw</div>
<div class="t" style="left:589.50px;top:422.04px;font-size:15.9px;color:#000;font-weight:normal;letter-spacing:-1.500px;">+0</div>
<div class="t" style="left:731.50px;top:422.04px;font-size:15.9px;color:#000;font-weight:normal;letter-spacing:-0.152px;">Demo gebouw - Hoofdgebouw - +0</div>
<div class="t" style="left:1027.50px;top:422.04px;font-size:15.9px;color:#000;font-weight:normal;letter-spacing:-0.020px;">154897</div>
<svg style="position:absolute;left:263px;top:417px" width="7" height="7" viewBox="0 0 7 7" fill="none"><path d="M0 0 H7 L0 7 Z" fill="#117a0f"/></svg>
<svg style="position:absolute;left:586px;top:417px" width="7" height="7" viewBox="0 0 7 7" fill="none"><path d="M0 0 H7 L0 7 Z" fill="#117a0f"/></svg>
<svg style="position:absolute;left:1024px;top:417px" width="7" height="7" viewBox="0 0 7 7" fill="none"><path d="M0 0 H7 L0 7 Z" fill="#117a0f"/></svg>
<div class="t" style="left:88.50px;top:446.04px;font-size:15.9px;color:#000;font-weight:normal;letter-spacing:0.124px;">Blustoestel schuim</div>
<div class="t" style="left:266.50px;top:446.04px;font-size:15.9px;color:#000;font-weight:normal;letter-spacing:-0.020px;">154898</div>
<div class="t" style="left:427.50px;top:446.04px;font-size:15.9px;color:#000;font-weight:normal;letter-spacing:0.100px;">Hoofdgebouw</div>
<div class="t" style="left:589.50px;top:446.04px;font-size:15.9px;color:#000;font-weight:normal;letter-spacing:-1.500px;">+0</div>
<div class="t" style="left:731.50px;top:446.04px;font-size:15.9px;color:#000;font-weight:normal;letter-spacing:-0.152px;">Demo gebouw - Hoofdgebouw - +0</div>
<div class="t" style="left:1027.50px;top:446.04px;font-size:15.9px;color:#000;font-weight:normal;letter-spacing:-0.020px;">154898</div>
<svg style="position:absolute;left:263px;top:441px" width="7" height="7" viewBox="0 0 7 7" fill="none"><path d="M0 0 H7 L0 7 Z" fill="#117a0f"/></svg>
<svg style="position:absolute;left:586px;top:441px" width="7" height="7" viewBox="0 0 7 7" fill="none"><path d="M0 0 H7 L0 7 Z" fill="#117a0f"/></svg>
<svg style="position:absolute;left:1024px;top:441px" width="7" height="7" viewBox="0 0 7 7" fill="none"><path d="M0 0 H7 L0 7 Z" fill="#117a0f"/></svg>
<div class="t" style="left:88.50px;top:470.04px;font-size:15.9px;color:#000;font-weight:normal;letter-spacing:0.124px;">Blustoestel schuim</div>
<div class="t" style="left:266.50px;top:470.04px;font-size:15.9px;color:#000;font-weight:normal;letter-spacing:-0.020px;">154900</div>
<div class="t" style="left:427.50px;top:470.04px;font-size:15.9px;color:#000;font-weight:normal;letter-spacing:0.100px;">Hoofdgebouw</div>
<div class="t" style="left:589.50px;top:470.04px;font-size:15.9px;color:#000;font-weight:normal;letter-spacing:-1.500px;">+0</div>
<div class="t" style="left:731.50px;top:470.04px;font-size:15.9px;color:#000;font-weight:normal;letter-spacing:-0.152px;">Demo gebouw - Hoofdgebouw - +0</div>
<div class="t" style="left:1027.50px;top:470.04px;font-size:15.9px;color:#000;font-weight:normal;letter-spacing:-0.020px;">154900</div>
<svg style="position:absolute;left:263px;top:465px" width="7" height="7" viewBox="0 0 7 7" fill="none"><path d="M0 0 H7 L0 7 Z" fill="#117a0f"/></svg>
<svg style="position:absolute;left:586px;top:465px" width="7" height="7" viewBox="0 0 7 7" fill="none"><path d="M0 0 H7 L0 7 Z" fill="#117a0f"/></svg>
<svg style="position:absolute;left:1024px;top:465px" width="7" height="7" viewBox="0 0 7 7" fill="none"><path d="M0 0 H7 L0 7 Z" fill="#117a0f"/></svg>
<div class="t" style="left:88.50px;top:494.04px;font-size:15.9px;color:#000;font-weight:normal;letter-spacing:0.124px;">Blustoestel schuim</div>
<div class="t" style="left:266.50px;top:494.04px;font-size:15.9px;color:#000;font-weight:normal;letter-spacing:-0.020px;">154905</div>
<div class="t" style="left:427.50px;top:494.04px;font-size:15.9px;color:#000;font-weight:normal;letter-spacing:0.100px;">Hoofdgebouw</div>
<div class="t" style="left:589.50px;top:494.04px;font-size:15.9px;color:#000;font-weight:normal;letter-spacing:-1.500px;">+0</div>
<div class="t" style="left:731.50px;top:494.04px;font-size:15.9px;color:#000;font-weight:normal;letter-spacing:-0.152px;">Demo gebouw - Hoofdgebouw - +0</div>
<div class="t" style="left:1027.50px;top:494.04px;font-size:15.9px;color:#000;font-weight:normal;letter-spacing:-0.020px;">154905</div>
<svg style="position:absolute;left:263px;top:489px" width="7" height="7" viewBox="0 0 7 7" fill="none"><path d="M0 0 H7 L0 7 Z" fill="#117a0f"/></svg>
<svg style="position:absolute;left:586px;top:489px" width="7" height="7" viewBox="0 0 7 7" fill="none"><path d="M0 0 H7 L0 7 Z" fill="#117a0f"/></svg>
<svg style="position:absolute;left:1024px;top:489px" width="7" height="7" viewBox="0 0 7 7" fill="none"><path d="M0 0 H7 L0 7 Z" fill="#117a0f"/></svg>
<div style="position:absolute;left:1607px;top:321px;width:26px;height:250px;background:#e8e3e5;"></div>
<div style="position:absolute;left:83px;top:343px;width:177px;height:22.6px;border:2px solid #107c41;"></div>
<div style="position:absolute;left:258.3px;top:367.4px;width:1.6px;height:2.4px;background:#fff;"></div>
<div style="position:absolute;left:261.8px;top:364.6px;width:2.4px;height:1.5px;background:#fff;"></div>
<div style="position:absolute;left:259.9px;top:366px;width:5.1px;height:5px;background:#1d6b40;"></div>
<div style="position:absolute;left:1610px;top:321px;width:21px;height:252px;background:#f4f4f4;border-radius:10px;"></div>
<svg style="position:absolute;left:1615px;top:327px" width="11" height="9" viewBox="0 0 11 9" fill="none"><path d="M5.5 1 L10 8 H1 Z" fill="#6e6e6e" stroke="#6e6e6e" stroke-width="1" stroke-linejoin="round"/></svg>
<div style="position:absolute;left:1615px;top:341.5px;width:11px;height:90px;background:#737373;border-radius:5.5px;"></div>
<svg style="position:absolute;left:1615px;top:559px" width="11" height="9" viewBox="0 0 11 9" fill="none"><path d="M5.5 8 L10 1 H1 Z" fill="#6e6e6e" stroke="#6e6e6e" stroke-width="1" stroke-linejoin="round"/></svg>
<div style="position:absolute;left:185px;top:571px;width:8px;height:8px;background:#fff;"></div>
<div style="position:absolute;left:254px;top:571px;width:8px;height:8px;background:#fff;"></div>
<div style="position:absolute;left:51px;top:571px;width:141px;height:40px;background:#ece3e8;border-radius:0 7px 0 0;"></div>
<div style="position:absolute;left:255px;top:571px;width:1378px;height:40px;background:linear-gradient(to right,#ece3e8,#ebe3e5);border-radius:7px 0 0 0;"></div>
<div style="position:absolute;left:192px;top:590px;width:63px;height:21px;background:#ece3e8;"></div>
<svg style="position:absolute;left:83px;top:585px" width="8" height="11" viewBox="0 0 8 11" fill="none"><path d="M7 0.8 L1.5 5.5 L7 10.2" stroke="#a0a0a0" stroke-width="1.3" stroke-linecap="round" stroke-linejoin="round"/></svg>
<svg style="position:absolute;left:124px;top:585px" width="8" height="11" viewBox="0 0 8 11" fill="none"><path d="M1 0.8 L6.5 5.5 L1 10.2" stroke="#a0a0a0" stroke-width="1.3" stroke-linecap="round" stroke-linejoin="round"/></svg>
<div style="position:absolute;left:192px;top:571px;width:63px;height:35px;background:#fff;border-radius:0 0 6px 6px;"></div>
<div class="t" style="left:202.40px;top:580.28px;font-size:16.8px;color:#242424;font-weight:normal;letter-spacing:0.600px;-webkit-text-stroke:0.5px #242424;">Table</div>
<div style="position:absolute;left:202px;top:601px;width:43px;height:2px;background:#107c41;border-radius:1px;"></div>
<div style="position:absolute;left:260px;top:580px;width:1px;height:23px;background:#c8c8c8;"></div>
<svg style="position:absolute;left:313px;top:582px" width="15" height="16" viewBox="0 0 15 16" fill="none"><path d="M7.5 0.5 V15.5 M0.5 8 H14.5" stroke="#242424" stroke-width="1.5"/></svg>
<div style="position:absolute;left:1003.5px;top:584.5px;width:3px;height:3px;background:#242424;"></div>
<div style="position:absolute;left:1003.5px;top:590px;width:3px;height:3px;background:#242424;"></div>
<div style="position:absolute;left:1003.5px;top:595.5px;width:3px;height:3px;background:#242424;"></div>
<div style="position:absolute;left:1025px;top:580px;width:585px;height:21px;background:#f4f4f4;border-radius:10.5px;"></div>
<svg style="position:absolute;left:1031px;top:585px" width="9" height="11" viewBox="0 0 9 11" fill="none"><path d="M8 1 V10 L1 5.5 Z" fill="#6e6e6e" stroke="#6e6e6e" stroke-width="1" stroke-linejoin="round"/></svg>
<div style="position:absolute;left:1046px;top:585px;width:123px;height:11px;background:#737373;border-radius:5.5px;"></div>
<svg style="position:absolute;left:1596px;top:585px" width="9" height="11" viewBox="0 0 9 11" fill="none"><path d="M1 1 V10 L8 5.5 Z" fill="#6e6e6e" stroke="#6e6e6e" stroke-width="1" stroke-linejoin="round"/></svg>
<div style="position:absolute;left:51px;top:611px;width:1582px;height:27px;background:#f4f4f4;border-radius:0 0 9px 9px;border-top:1px solid #fff;box-sizing:border-box;"></div>
<div class="t" style="left:65.70px;top:619.56px;font-size:12.8px;color:#3b3b3b;font-weight:normal;letter-spacing:-0.200px;">Gereed</div>
<svg style="position:absolute;left:128px;top:612px" width="26" height="26" viewBox="0 0 26 26" fill="none">
<circle cx="12.6" cy="7" r="2.3" stroke="#242424" stroke-width="1.3"/>
<path d="M10.3 8.3 C7 6.6 4.6 7.3 5.2 9.2 C5.8 10.7 8.4 10.4 9.3 12.2 C9.9 14 9.6 16 8.6 18 C7.7 19.8 8.6 21.3 10.6 20.5" stroke="#242424" stroke-width="1.3" stroke-linecap="round"/>
<path d="M14.9 8.3 C18.2 6.6 20.6 7.3 20 9.2 C19.4 10.7 16.3 10.3 15.8 12.2 V14.3" stroke="#242424" stroke-width="1.3" stroke-linecap="round"/>
<path d="M13.4 17.4 L17.2 20.6 L23.6 14.5" stroke="#242424" stroke-width="1.3" stroke-linecap="round" stroke-linejoin="round"/>
</svg>
<div class="t" style="left:155.00px;top:619.20px;font-size:13px;color:#3b3b3b;font-weight:normal;letter-spacing:0.003px;">Toegankelijkheid: alles in orde</div>
<div style="position:absolute;left:1247px;top:611px;width:50px;height:26px;background:#e0e0e0;"></div>
<svg style="position:absolute;left:1263px;top:616px" width="17" height="17" viewBox="0 0 17 17" fill="none"><rect x="0.7" y="0.7" width="15.6" height="15.6" fill="none" stroke="#424242" stroke-width="1.3"/><path d="M5.9 0.7 V16.3 M11.1 0.7 V16.3 M0.7 5.9 H16.3 M0.7 11.1 H16.3" stroke="#424242" stroke-width="1.3"/></svg>
<svg style="position:absolute;left:1313px;top:616px" width="18" height="17" viewBox="0 0 18 17" fill="none"><rect x="0.7" y="0.7" width="16.6" height="15.6" stroke="#424242" stroke-width="1.3"/><rect x="4" y="3.5" width="10" height="10" stroke="#424242" stroke-width="1.1"/><path d="M6 6.5 H12 M6 8.5 H12 M6 10.5 H12" stroke="#424242" stroke-width="1"/></svg>
<svg style="position:absolute;left:1363px;top:616px" width="18" height="17" viewBox="0 0 18 17" fill="none"><rect x="0.7" y="0.7" width="16.6" height="15.6" rx="1" stroke="#424242" stroke-width="1.4"/><path d="M5.6 0.7 V9.4 M11 0.7 V9.4 M0.7 9.4 H11" stroke="#424242" stroke-width="1.3"/></svg>
<div style="position:absolute;left:1404px;top:624.5px;width:10px;height:1.3px;background:#424242;"></div>
<div style="position:absolute;left:1420px;top:624.7px;width:125px;height:1px;background:#8a8a8a;"></div>
<div style="position:absolute;left:1480px;top:618px;width:6px;height:14px;background:#616161;border-radius:1px;"></div>
<svg style="position:absolute;left:1550.5px;top:619.5px" width="11" height="11" viewBox="0 0 11 11" fill="none"><path d="M5.5 0.5 V10.5 M0.5 5.5 H10.5" stroke="#424242" stroke-width="1.3"/></svg>
<div class="t" style="left:1577.00px;top:620.12px;font-size:12.5px;color:#3b3b3b;font-weight:normal;letter-spacing:-0.333px;">100%</div>
<div style="position:absolute;left:50.5px;top:50.5px;width:1583px;height:588px;border:1.5px solid rgba(6,70,45,0.85);border-radius:8.5px;box-sizing:border-box;pointer-events:none;"></div>
</body></html>
